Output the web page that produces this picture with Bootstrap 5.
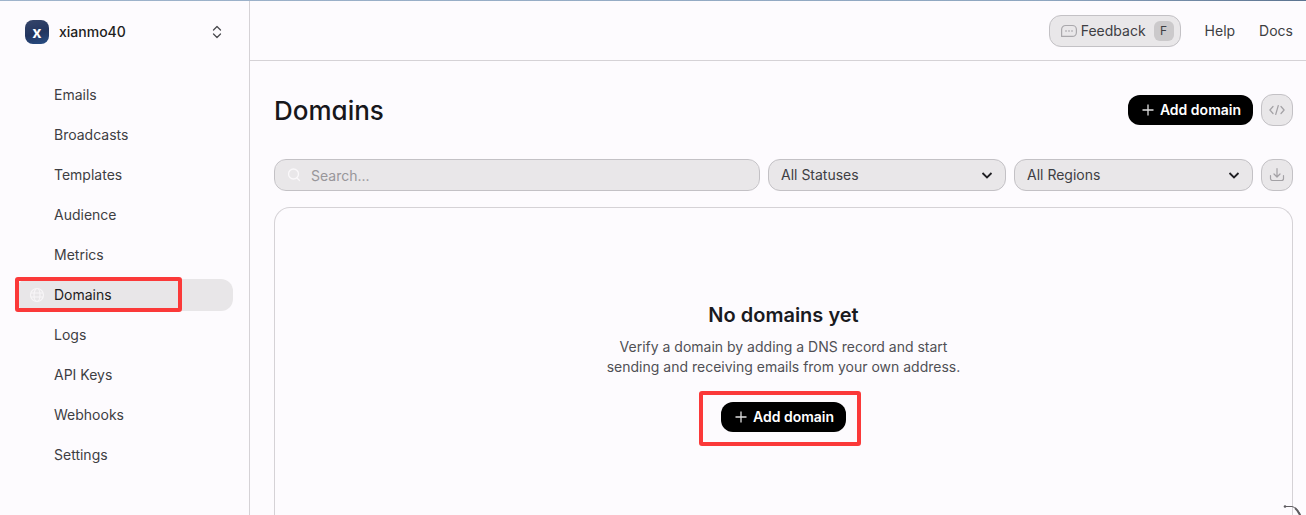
<!DOCTYPE html>
<html lang="en">
<head>
<meta charset="utf-8">
<meta name="viewport" content="width=device-width, initial-scale=1">
<title>Domains</title>
<link href="https://cdn.jsdelivr.net/npm/bootstrap@5.3.0/dist/css/bootstrap.min.css" rel="stylesheet">
<style>
:root { --line: #d5d2d6; --edge: #c3c1c5; --fill: #e9e7e9; --ink: #3e3e43; --red: #fb3939; }
body { font: 400 14px/20px Inter, "Liberation Sans", sans-serif; background: #fdfbfe; color: var(--ink); }
.topline { height: 1px; background: linear-gradient(90deg, #9fb4cc, #8ea6c0 80%, #5b7390); z-index: 3; }
.shell { height: 100vh; }
.sidebar { width: 250px; border-right: 1px solid var(--line); }
.team { width: calc(100% - 49px); height: 32px; margin: 16px 24px 31px 25px; color: #1d1d21; font-size: 14px; font-weight: 500; }
.avatar { width: 24px; height: 24px; border-radius: 8px; background: linear-gradient(165deg, #36466a, #22355f 55%, #284f86); color: #fff; font-size: 16px; font-weight: 700; }
.avatar + span { margin-left: 10px; }
.side-item { height: 32px; padding: 0 14px; border-radius: 12px; color: var(--ink); text-decoration: none; }
.side-item.active { background: #e8e6e8; color: #1d1d21; }
.icon-slot { width: 16px; height: 16px; }
.callout-box { position: absolute; border: 4px solid var(--red); border-radius: 3px; pointer-events: none; }
.callout-side { left: -1px; top: -2px; width: 167px; height: 35px; }
.callout-add { inset: -11px -15px -14px -22px; }
.topbar { height: 61px; padding: 1px 13px 0 24px; border-bottom: 1px solid var(--line); }
.topbar a { color: var(--ink); text-decoration: none; }
.soft { height: 32px; background-color: var(--fill); border: 1px solid var(--edge); border-radius: 12px; color: var(--ink); font-size: 14px; line-height: 20px; }
.soft:hover { background-color: #e1dfe1; }
.feedback { padding: 0 6px 0 11px; }
.square { width: 32px; color: #a3a1a5; }
.key { width: 20px; height: 20px; margin-left: 8px; border-radius: 6px; background: #cbc9cb; color: inherit; font-family: inherit; font-size: 12px; }
.content { padding: 33px 13px 0 24px; }
.page-title { padding-top: 2px; font-size: 26px; line-height: 30px; font-weight: 500; color: #17171b; font-feature-settings: "cv11"; }
.add { height: 30px; padding: 0 12px; border-radius: 12px; background: #000; color: #fff; font-size: 14px; line-height: 20px; font-weight: 600; }
.add:hover { background: #222; color: #fff; }
.filters { display: grid; grid-template-columns: minmax(0, 486fr) minmax(0, 238fr) minmax(0, 239fr) 32px; gap: 8px; margin: 33px 0 16px; }
.search-icon { position: absolute; left: 13px; top: 9px; }
.search { padding: 1px 12px 0 36px; }
.search::placeholder { color: #98969a; }
.pick { padding: 0 32px 0 12px; background-size: 12px 12px; background-position: right 12px center; background-image: url("data:image/svg+xml,%3Csvg xmlns='http://www.w3.org/2000/svg' viewBox='0 0 12 12'%3E%3Cpath d='M1.5 4 6 8.5 10.500 4' fill='none' stroke='%23202024' stroke-width='1.800'/%3E%3C/svg%3E"); }
.panel { border: 1px solid var(--line); border-bottom: 0; border-radius: 16px 16px 0 0; padding-top: 95px; }
.empty-title { font-size: 20px; line-height: 24px; font-weight: 600; color: #1a1a1e; margin-bottom: 10px; }
.empty-text { max-width: 360px; color: #505055; margin-bottom: 25px; }
.corner-mark { position: fixed; right: 0; bottom: 0; }
</style>
</head>
<body>
<div class="topline fixed-top"></div>
<div class="shell d-flex overflow-hidden">
  <aside class="sidebar flex-shrink-0">
    <button type="button" class="team btn border-0 p-0 d-flex align-items-center lh-1">
      <span class="avatar d-flex align-items-center justify-content-center" aria-hidden="true">x</span>
      <span>xianmo40</span>
      <svg class="ms-auto" width="16" height="16" viewBox="0 0 16 16" fill="none" stroke="#4b4b50" stroke-width="1.3" stroke-linecap="round" stroke-linejoin="round"><path d="m4.500 6 3.500-3.500L11.500 6M4.500 10 8 13.500l3.500-3.500"/></svg>
    </button>
    <nav class="d-flex flex-column gap-2 px-3">
      <a class="side-item d-flex align-items-center gap-2" href="#"><span class="icon-slot"></span>Emails</a>
      <a class="side-item d-flex align-items-center gap-2" href="#"><span class="icon-slot"></span>Broadcasts</a>
      <a class="side-item d-flex align-items-center gap-2" href="#"><span class="icon-slot"></span>Templates</a>
      <a class="side-item d-flex align-items-center gap-2" href="#"><span class="icon-slot"></span>Audience</a>
      <a class="side-item d-flex align-items-center gap-2" href="#"><span class="icon-slot"></span>Metrics</a>
      <a class="side-item active position-relative d-flex align-items-center gap-2" href="#" aria-current="page">
        <svg class="icon-slot" viewBox="0 0 16 16" fill="none" stroke="#f7f5f7" stroke-width="1.2"><circle cx="7" cy="8" r="6.500"/><ellipse cx="7" cy="8" rx="3" ry="6.500"/><path d="M1 6h12M1 10h12"/></svg>Domains
        <span class="callout-box callout-side"></span>
      </a>
      <a class="side-item d-flex align-items-center gap-2" href="#"><span class="icon-slot"></span>Logs</a>
      <a class="side-item d-flex align-items-center gap-2" href="#"><span class="icon-slot"></span>API Keys</a>
      <a class="side-item d-flex align-items-center gap-2" href="#"><span class="icon-slot"></span>Webhooks</a>
      <a class="side-item d-flex align-items-center gap-2" href="#"><span class="icon-slot"></span>Settings</a>
    </nav>
  </aside>
  <div class="flex-grow-1 d-flex flex-column">
    <header class="topbar d-flex align-items-center justify-content-end gap-4">
      <button type="button" class="soft feedback btn d-flex align-items-center">
        <svg class="me-1" width="16" height="16" viewBox="0 0 16 16" fill="none" stroke="#aaa8ac" stroke-width="1.2"><path d="M.6 13.400V6.500a4 4 0 0 1 4-4h6.800a4 4 0 0 1 4 4v2.900a4 4 0 0 1-4 4z" stroke-linejoin="round"/><path d="M4.300 8h1.400M7.300 8h1.400M10.300 8h1.400" stroke-width="1.400"/></svg>
        Feedback
        <kbd class="key d-flex align-items-center justify-content-center p-0">F</kbd>
      </button>
      <a href="#">Help</a>
      <a href="#">Docs</a>
    </header>
    <main class="content flex-grow-1 d-flex flex-column">
      <div class="d-flex align-items-center gap-2">
        <h1 class="page-title m-0 me-auto">Domains</h1>
        <button type="button" class="add btn border-0 d-flex align-items-center gap-1"><svg width="16" height="16" viewBox="0 0 16 16" stroke="#dedede" stroke-width="1.300"><path d="M8 2.500v11M2.500 8h11"/></svg>Add domain</button>
        <button type="button" class="soft square btn p-0 d-flex align-items-center justify-content-center" aria-label="API reference"><svg width="16" height="16" viewBox="0 0 16 16" fill="none" stroke="currentColor" stroke-width="1.200" stroke-linecap="round" stroke-linejoin="round"><path d="M4 4.500.9 8 4 11.500M12 4.500 15.100 8 12 11.500M9.300 3.500 6.700 12.500"/></svg></button>
      </div>
      <div class="filters">
        <div class="position-relative">
          <svg class="search-icon" width="14" height="14" viewBox="0 0 14 14" fill="none" stroke="#faf8fa" stroke-width="1.300" stroke-linecap="round"><circle cx="6.500" cy="6" r="5"/><path d="m10 10 2.500 2.500"/></svg>
          <input type="search" class="soft search form-control" placeholder="Search..." aria-label="Search domains">
        </div>
        <select class="soft pick form-select" aria-label="Status"><option>All Statuses</option></select>
        <select class="soft pick form-select" aria-label="Region"><option>All Regions</option></select>
        <button type="button" class="soft square btn p-0 d-flex align-items-center justify-content-center" aria-label="Export"><svg width="16" height="16" viewBox="0 0 16 16" fill="none" stroke="currentColor" stroke-width="1.200" stroke-linecap="round" stroke-linejoin="round"><path d="M8 1.500v8M5 7l3 3 3-3M1.500 8.500v3a2 2 0 0 0 2 2h9a2 2 0 0 0 2-2v-3"/></svg></button>
      </div>
      <section class="panel flex-grow-1 d-flex flex-column align-items-center text-center">
        <h2 class="empty-title">No domains yet</h2>
        <p class="empty-text">Verify a domain by adding a DNS record and start sending and receiving emails from your own address.</p>
        <div class="position-relative">
          <button type="button" class="add btn border-0 d-flex align-items-center gap-1"><svg width="16" height="16" viewBox="0 0 16 16" stroke="#dedede" stroke-width="1.300"><path d="M8 2.500v11M2.500 8h11"/></svg>Add domain</button>
          <span class="callout-box callout-add"></span>
        </div>
      </section>
    </main>
  </div>
</div>
<svg class="corner-mark" width="23" height="10" viewBox="0 0 23 10" fill="none" stroke="#5f5d61"><path d="M2 1.500h7q5 1 8.500 8.500" stroke-width="1"/><path d="M12 3q3 2.500 5 7" stroke-width="2"/><circle cx="2" cy="1.500" r="1.300" fill="#5f5d61" stroke="none"/></svg>
<script src="https://cdn.jsdelivr.net/npm/bootstrap@5.3.0/dist/js/bootstrap.bundle.min.js"></script>
</body>
</html>
